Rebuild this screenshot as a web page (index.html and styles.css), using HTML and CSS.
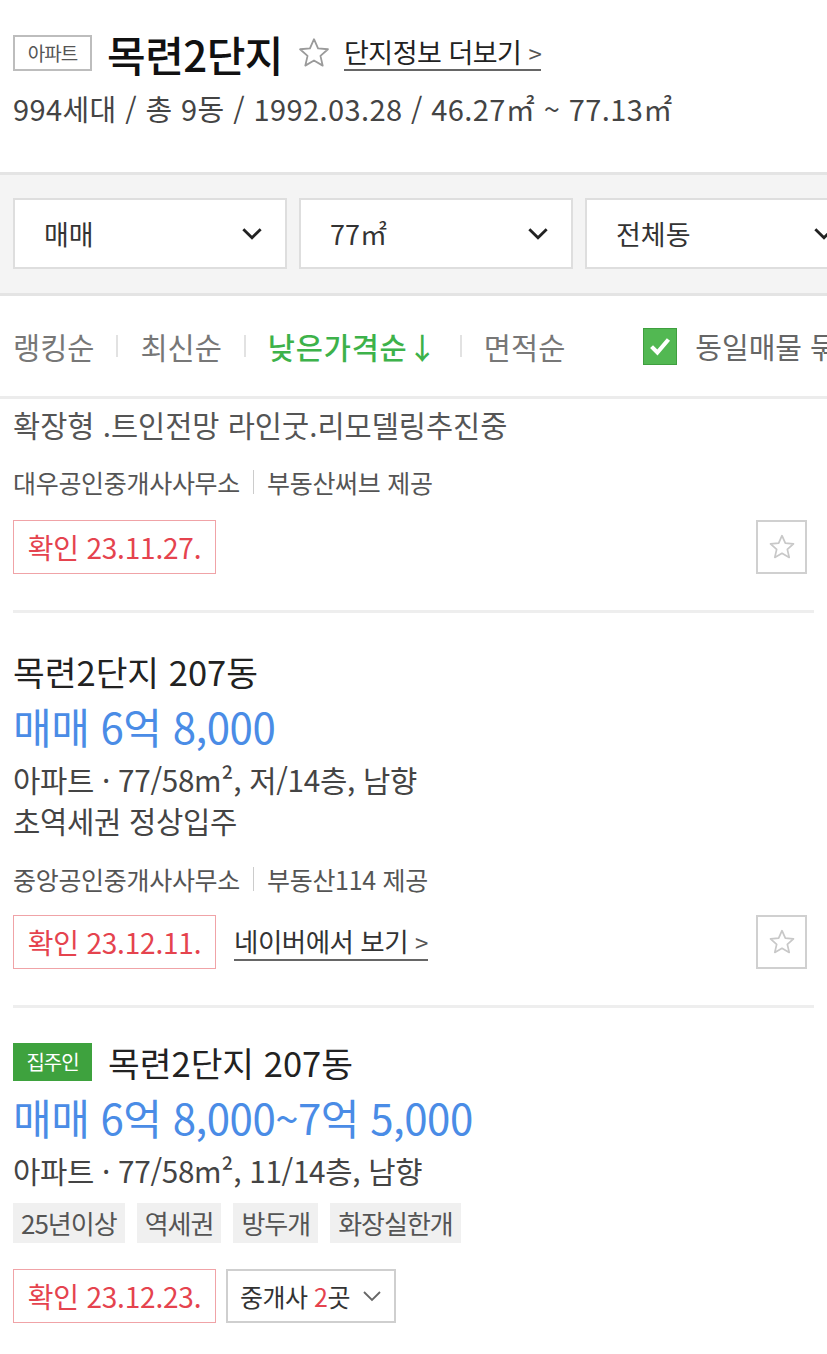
FILE: index.html
```html
<!DOCTYPE html>
<html lang="ko">
<head>
<meta charset="utf-8">
<link rel="stylesheet" href="styles.css">
</head>
<body>
<div class="page">
  <header class="complex">
    <div class="complex-title">
      <span class="type-tag">아파트</span>
      <h1 class="name">목련2단지</h1>
      <svg class="fav" viewBox="0 0 24 24" width="36" height="36"><path d="M12 2.8l2.7 6.1 6.6.6-5 4.4 1.5 6.5L12 17l-5.8 3.4 1.5-6.5-5-4.4 6.6-.6z" fill="none" stroke="#9a9a9a" stroke-width="1.2" stroke-linejoin="round"/></svg>
      <a class="more-link">단지정보 더보기 <span class="gt">&gt;</span></a>
    </div>
    <p class="complex-info">994세대 / 총 9동 / 1992.03.28 / 46.27㎡ ~ 77.13㎡</p>
  </header>

  <section class="filters">
    <div class="select"><span>매매</span><svg class="chev" viewBox="0 0 20 12" width="22" height="13"><path d="M2 2l8 8 8-8" fill="none" stroke="#222" stroke-width="2.6"/></svg></div>
    <div class="select"><span>77㎡</span><svg class="chev" viewBox="0 0 20 12" width="22" height="13"><path d="M2 2l8 8 8-8" fill="none" stroke="#222" stroke-width="2.6"/></svg></div>
    <div class="select"><span>전체동</span><svg class="chev" viewBox="0 0 20 12" width="22" height="13"><path d="M2 2l8 8 8-8" fill="none" stroke="#222" stroke-width="2.6"/></svg></div>
  </section>

  <nav class="sort">
    <span class="sort-item">랭킹순</span>
    <span class="sep"></span>
    <span class="sort-item">최신순</span>
    <span class="sep"></span>
    <span class="sort-item active">낮은가격순↓</span>
    <span class="sep"></span>
    <span class="sort-item">면적순</span>
    <label class="same">
      <span class="check"><svg viewBox="0 0 20 20" width="26" height="26"><path d="M3.5 10.5l4.5 4.5 8.5-10" fill="none" stroke="#fff" stroke-width="3.2"/></svg></span>
      <span>동일매물 묶기</span>
    </label>
  </nav>

  <div class="list">
    <article class="item first">
      <p class="desc">확장형 .트인전망 라인굿.리모델링추진중</p>
      <p class="agent">대우공인중개사사무소<span class="bar"></span>부동산써브 제공</p>
      <div class="actions">
        <span class="confirm">확인 23.11.27.</span>
        <button class="star-btn"><svg viewBox="0 0 24 24" width="32" height="32"><path d="M12 3.5l2.5 5.6 6.1.6-4.6 4.1 1.4 6L12 16.7l-5.4 3.1 1.4-6-4.6-4.1 6.1-.6z" fill="none" stroke="#c8c8c8" stroke-width="1.3" stroke-linejoin="round"/></svg></button>
      </div>
    </article>

    <article class="item">
      <h2 class="item-title">목련2단지 207동</h2>
      <p class="price">매매 6억 8,000</p>
      <p class="spec">아파트 · 77/58m², 저/14층, 남향</p>
      <p class="spec second">초역세권 정상입주</p>
      <p class="agent">중앙공인중개사사무소<span class="bar"></span>부동산114 제공</p>
      <div class="actions">
        <span class="confirm">확인 23.12.11.</span>
        <a class="naver-link">네이버에서 보기 <span class="gt">&gt;</span></a>
        <button class="star-btn"><svg viewBox="0 0 24 24" width="32" height="32"><path d="M12 3.5l2.5 5.6 6.1.6-4.6 4.1 1.4 6L12 16.7l-5.4 3.1 1.4-6-4.6-4.1 6.1-.6z" fill="none" stroke="#c8c8c8" stroke-width="1.3" stroke-linejoin="round"/></svg></button>
      </div>
    </article>

    <article class="item last">
      <h2 class="item-title"><span class="owner">집주인</span>목련2단지 207동</h2>
      <p class="price">매매 6억 8,000~7억 5,000</p>
      <p class="spec">아파트 · 77/58m², 11/14층, 남향</p>
      <div class="tags">
        <span class="tag">25년이상</span>
        <span class="tag">역세권</span>
        <span class="tag">방두개</span>
        <span class="tag">화장실한개</span>
      </div>
      <div class="actions">
        <span class="confirm">확인 23.12.23.</span>
        <span class="agents">중개사 <em>2</em>곳<svg viewBox="0 0 20 12" width="20" height="12"><path d="M2 2l8 8 8-8" fill="none" stroke="#666" stroke-width="1.8"/></svg></span>
      </div>
    </article>
  </div>
</div>
</body>
</html>
```

FILE: styles.css
```css
* { box-sizing: border-box; }
html, body { margin: 0; padding: 0; }
body {
  background: #fff;
  font-family: "Noto Sans CJK KR", "Noto Sans", sans-serif;
  color: #222;
  overflow: hidden;
  width: 827px;
}
p, h1, h2 { margin: 0; font-weight: normal; }
.page { width: 827px; }

.complex { padding: 28px 13px 0; }
.complex-title { display: flex; align-items: center; height: 50px; }
.type-tag {
  border: 2px solid #bdbdbd;
  font-size: 19px;
  color: #555;
  height: 36px;
  line-height: 32px;
  width: 79px;
  text-align: center;
  letter-spacing: -1px;
}
.name {
  font-size: 42px;
  font-weight: 500;
  color: #111;
  margin-left: 15px;
  letter-spacing: -0.5px;
}
.fav { margin-left: 13px; }
.more-link {
  margin-left: 12px;
  font-size: 27px;
  color: #222;
  letter-spacing: -0.5px;
  border-bottom: 2px solid #666;
  line-height: 32px;
}
.gt { font-size: 24px; color: #555; }
.complex-info {
  margin-top: 10px;
  font-size: 29px;
  color: #444;
  letter-spacing: 0.4px;
  line-height: 40px;
}

.filters {
  margin-top: 44px;
  border-top: 3px solid #e4e4e4;
  border-bottom: 3px solid #e4e4e4;
  background: #f4f4f4;
  padding: 23px 13px 24px;
  display: flex;
  gap: 12px;
}
.select {
  flex: 0 0 274px;
  height: 71px;
  background: #fff;
  border: 2px solid #dedede;
  display: flex;
  align-items: center;
  justify-content: space-between;
  padding: 0 22px 0 29px;
  font-size: 27px;
  color: #333;
}

.sort {
  height: 103px;
  display: flex;
  align-items: center;
  padding: 0 13px;
  border-bottom: 3px solid #ececec;
  white-space: nowrap;
}
.sort-item { font-size: 29.5px; color: #777; flex: none; }
.sort-item.active { color: #3db24a; font-weight: 500; letter-spacing: 0.8px; }
.sep { flex: none; width: 2px; height: 22px; background: #e2e2e2; margin: 0 22px; }
.same { flex: none; display: flex; align-items: center; margin-left: 78px; font-size: 29px; color: #666; }
.check {
  width: 34px; height: 37px;
  background: #52b852;
  border: 1px solid #3f9f3f;
  display: flex; align-items: center; justify-content: center;
  margin-right: 18px;
  flex: none;
}

.list { padding: 0 13px; }
.item { padding: 36px 0 36px; border-bottom: 3px solid #eee; }
.item.first { padding-top: 5px; }
.item.last { border-bottom: 0; padding-top: 32px; }
.desc { font-size: 29.5px; color: #555; line-height: 40px; }
.agent {
  margin-top: 23px;
  font-size: 25px;
  color: #555;
  letter-spacing: -0.3px;
  display: flex;
  align-items: center;
  line-height: 30px;
}
.bar { width: 1px; height: 24px; background: #ccc; margin: 0 13px; }
.actions { display: flex; align-items: center; margin-top: 23px; gap: 18px; }
.confirm {
  border: 1px solid #f0a3a7;
  color: #e5434e;
  font-size: 28px;
  height: 54px;
  width: 203px;
  display: flex;
  align-items: center;
  justify-content: center;
  letter-spacing: -0.2px;
}
.star-btn {
  margin-left: auto;
  width: 51px;
  height: 54px;
  border: 2px solid #d0d0d0;
  background: #fff;
  display: flex;
  align-items: center;
  justify-content: center;
  padding: 0;
  margin-right: 7px;
}
.naver-link {
  font-size: 26.5px;
  color: #333;
  border-bottom: 2px solid #666;
  letter-spacing: -0.5px;
  line-height: 34px;
}
.item-title {
  font-size: 34.5px;
  color: #222;
  display: flex;
  align-items: center;
  line-height: 44px;
}
.owner {
  background: #3ea23e;
  color: #fff;
  font-size: 20px;
  height: 38px;
  line-height: 38px;
  width: 79px;
  text-align: center;
  margin-right: 16px;
  letter-spacing: -1px;
}
.price { font-size: 42px; color: #4a8ce6; line-height: 52px; margin-top: 7px; letter-spacing: -0.5px; }
.spec { font-size: 29.7px; color: #444; line-height: 40px; margin-top: 8px; letter-spacing: -0.3px; }
.spec.second { margin-top: 1px; }
.item:not(.first) .agent { margin-top: 23px; }
.item:not(.first) .actions { margin-top: 21px; }
.tags { display: flex; gap: 12px; margin-top: 12px; }
.tag { background: #f0f0f0; font-size: 26px; color: #555; padding: 0 8px; height: 40px; line-height: 40px; letter-spacing: -1px; }
.item.last .actions { margin-top: 26px; gap: 10px; }
.agents {
  border: 2px solid #cfcfcf;
  height: 54px;
  display: flex;
  align-items: center;
  padding: 0 12px;
  font-size: 25px;
  color: #333;
  letter-spacing: -0.5px;
  white-space: pre;
}
.agents em { font-style: normal; color: #e5434e; }
.agents svg { margin-left: 12px; }
```
